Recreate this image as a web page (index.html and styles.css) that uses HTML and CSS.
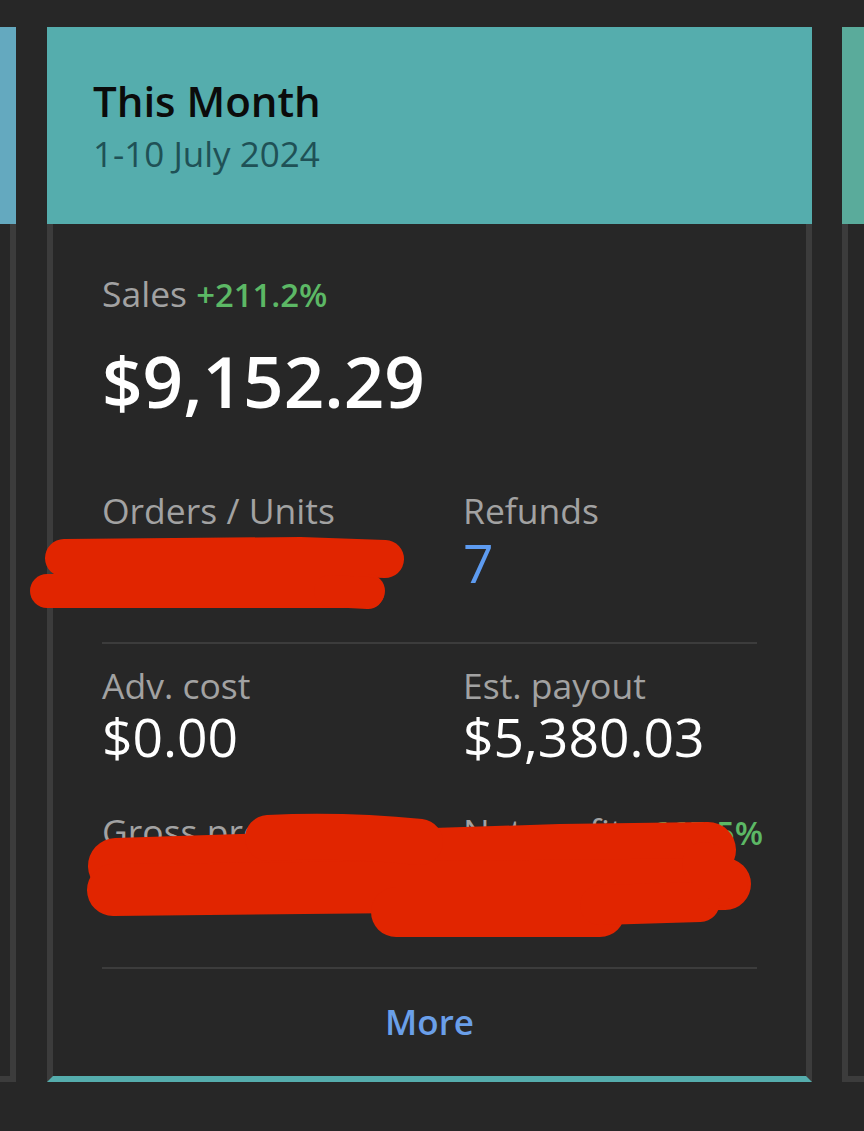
FILE: index.html
```html
<!DOCTYPE html>
<html lang="en">
<head>
<meta charset="utf-8">
<title>This Month</title>
<link rel="stylesheet" href="styles.css">
</head>
<body>
<div class="deck">
  <section class="card card--left">
    <header class="card-head head-blue"></header>
    <div class="card-body"></div>
  </section>

  <section class="card card--main">
    <header class="card-head head-teal">
      <h1 class="head-title">This Month</h1>
      <p class="head-sub">1-10 July 2024</p>
    </header>
    <div class="card-body body-main">
      <div class="sales-line"><span class="lbl">Sales</span> <span class="up">+211.2%</span></div>
      <div class="sales-total">$9,152.29</div>

      <div class="stats stats--first">
        <div class="stat">
          <div class="lbl">Orders / Units</div>
          <div class="val">000 / 000</div>
        </div>
        <div class="stat">
          <div class="lbl">Refunds</div>
          <div class="val val--link">7</div>
        </div>
      </div>

      <div class="rule rule--one"></div>

      <div class="stats stats--second">
        <div class="stat">
          <div class="lbl">Adv. cost</div>
          <div class="val">$0.00</div>
        </div>
        <div class="stat">
          <div class="lbl">Est. payout</div>
          <div class="val">$5,380.03</div>
        </div>
      </div>

      <div class="stats stats--third">
        <div class="stat">
          <div class="lbl">Gross profit</div>
          <div class="val">$0,000.00</div>
        </div>
        <div class="stat">
          <div class="lbl">Net profit <span class="up">+665.5%</span></div>
          <div class="val">$0,000.00</div>
        </div>
      </div>

      <div class="rule rule--two"></div>

      <div class="more">More</div>
    </div>
  </section>

  <section class="card card--right">
    <header class="card-head head-green"></header>
    <div class="card-body"></div>
  </section>
</div>

<svg class="redact" width="864" height="1131" viewBox="0 0 864 1131" aria-hidden="true">
  <g fill="none" stroke="#e12500" stroke-linecap="round" stroke-linejoin="round">
    <path d="M64 558 L300 556 L385 559" stroke-width="38"/>
    <path d="M47 591 L368 591" stroke-width="34"/>
    <path d="M330 591 L368 593" stroke-width="32"/>
    <path d="M116 866 L560 852 L708 850" stroke-width="56"/>
    <path d="M113 890 L725 884" stroke-width="52"/>
    <path d="M268 838 C330 835 380 838 420 842" stroke-width="46"/>
    <path d="M396 912 L600 912" stroke-width="50"/>
    <path d="M600 905 L700 902" stroke-width="40"/>
    <path d="M704 864 L726 884" stroke-width="44"/>
  </g>
</svg>
</body>
</html>
```

FILE: styles.css
```css
html, body {
  margin: 0;
  padding: 0;
}

body {
  background: #272727;
  height: 1131px;
  overflow: hidden;
  position: relative;
  font-family: "Open Sans", "Noto Sans", sans-serif;
}

.deck {
  display: flex;
  gap: 31px;
  padding-top: 27px;
  margin-left: -751px;
  width: max-content;
}

.card {
  display: flex;
  flex-direction: column;
  flex: none;
  width: 765px;
}

.card--left {
  width: 767px;
}

.card--right {
  margin-left: -1px;
}

.card-head {
  box-sizing: border-box;
  height: 197px;
  padding: 50px 46px 0;
}

.head-blue { background: #64a9bf; }
.head-teal { background: #55adad; }
.head-green { background: #5aab9b; }

.card-body {
  box-sizing: border-box;
  height: 858px;
  border: 6px solid #3c3c3c;
  border-top: 0;
}

.body-main {
  border-bottom-color: #55adad;
  padding: 47px 49px 32px;
  display: flex;
  flex-direction: column;
}

.head-title {
  margin: 0;
  font-size: 42px;
  line-height: 48px;
  font-weight: 600;
  color: #0b0b0b;
}

.head-sub {
  margin: 7px 0 0;
  font-size: 35px;
  line-height: 44px;
  font-weight: 400;
  color: #1f5156;
}

.lbl {
  color: #a2a2a2;
  font-size: 35.5px;
  line-height: 44px;
}

.up {
  color: #5cb865;
  font-weight: 600;
  font-size: 32.8px;
}

.sales-line {
  font-size: 35.5px;
  line-height: 44px;
  white-space: nowrap;
}

.sales-total {
  margin-top: 24px;
  font-size: 71px;
  line-height: 80px;
  font-weight: 600;
  color: #ffffff;
}

.stats {
  display: grid;
  grid-template-columns: 361px 1fr;
}

.stats--first { margin-top: 67px; }
.stats--second { margin-top: 19px; }
.stats--third { margin-top: 42px; }

.stat .lbl {
  white-space: nowrap;
}

.val {
  font-size: 53.4px;
  line-height: 60px;
  color: #ffffff;
  white-space: nowrap;
}

.stats--first .val { margin-top: 1px; }
.stats--second .val,
.stats--third .val { margin-top: 0; }

.val--link {
  color: #5d9bf0;
}

.rule {
  height: 2px;
  background: #3c3c3c;
}

.rule--one { margin-top: 49px; }
.rule--two { margin-top: 52px; }

.more {
  margin-top: 31px;
  text-align: center;
  font-size: 35px;
  line-height: 44px;
  font-weight: 600;
  color: #6a9fe9;
}

.redact {
  position: absolute;
  top: 0;
  left: 0;
  pointer-events: none;
}
```
